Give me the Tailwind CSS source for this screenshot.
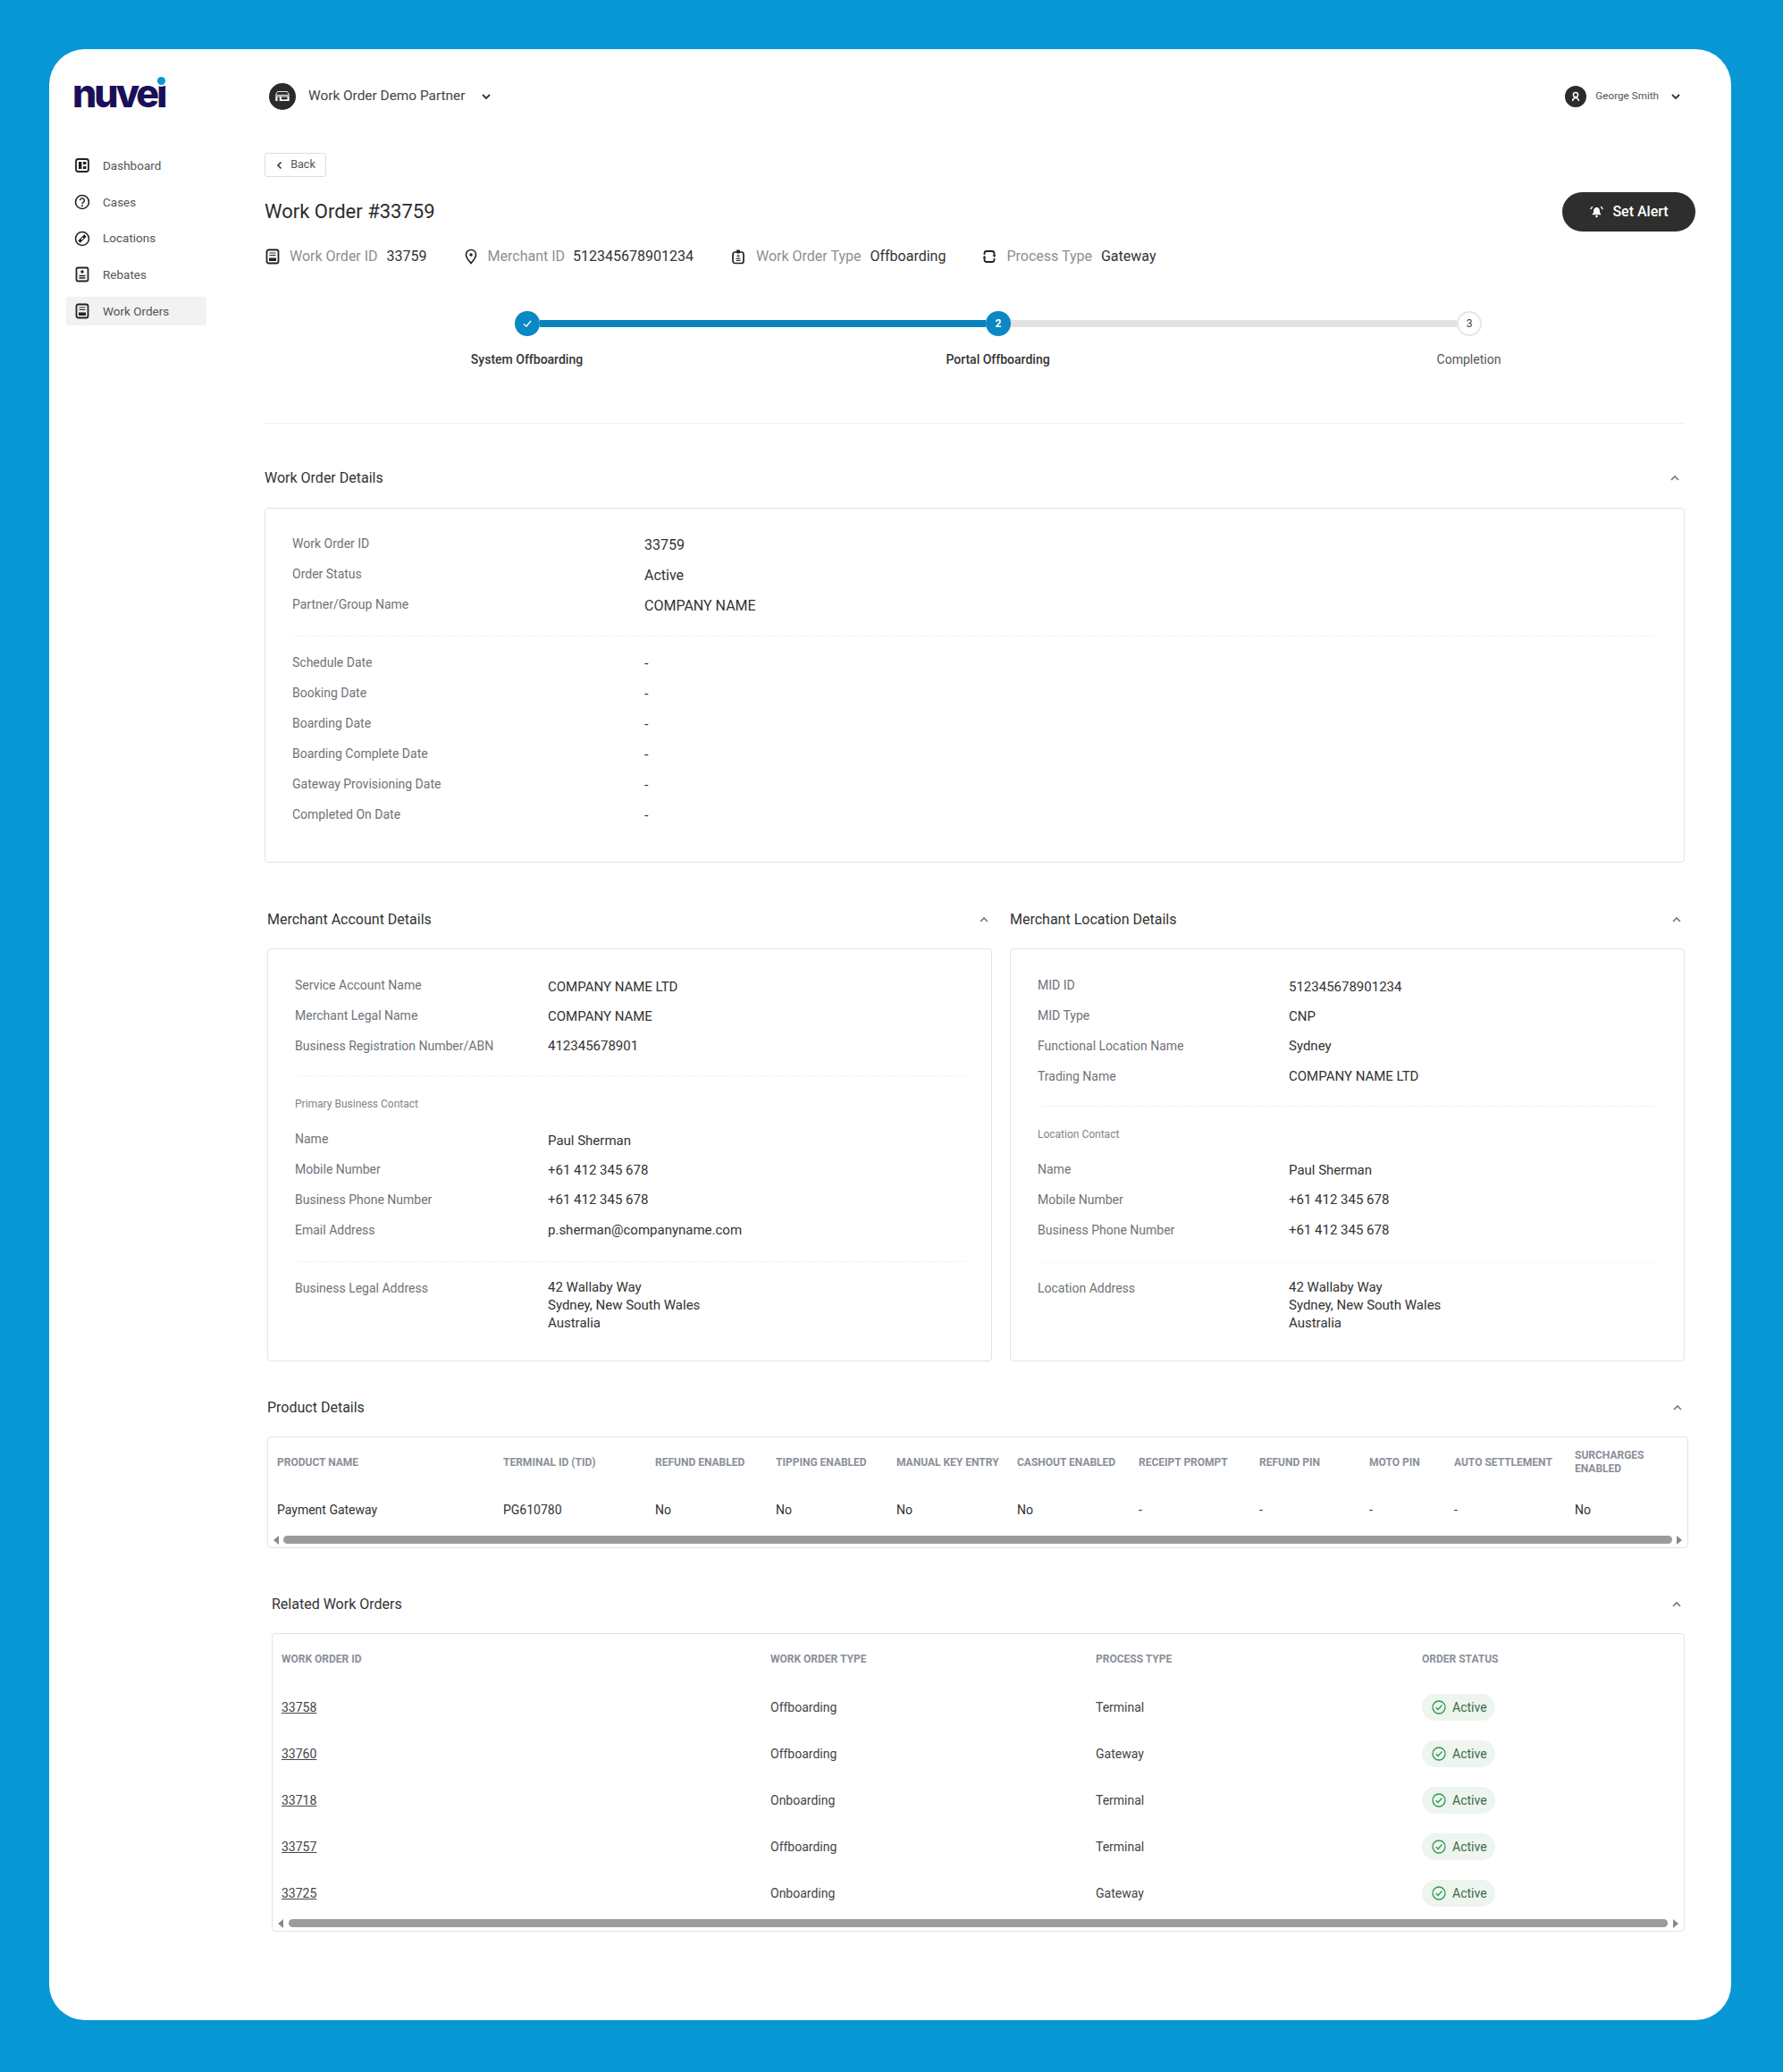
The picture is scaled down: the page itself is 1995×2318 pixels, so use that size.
<!DOCTYPE html>
<html lang="en">
<head>
  <meta charset="UTF-8" />
  <title>Work Order #33759</title>
  <script src="https://cdn.jsdelivr.net/npm/@tailwindcss/browser@4"></script>
</head>
<body class="bg-[#0797d4] font-['Roboto',sans-serif]">
  <div class="w-[1995px] h-[2318px] pt-[55px] pl-[55px]">
    <div class="w-[1882px] h-[2205px] bg-white rounded-[40px] flex">

      <!-- sidebar -->
      <aside class="w-[241px] shrink-0 pl-[19px]">
        <div class="relative w-[110px] h-[46px] mt-[26px] ml-[7px] text-[#1a1059] font-['Inter',sans-serif] font-extrabold text-[43px] leading-[46px] tracking-[-3px]">
          nuvei
          <span class="absolute left-[95px] top-[5px] w-[9px] h-[9px] rounded-full bg-[#0797d4] ring-2 ring-white"></span>
        </div>
        <nav class="mt-[42px] flex flex-col gap-[8.75px] text-[13.5px] text-[#555]">
          <a class="flex items-center h-[32px] pl-[9px] gap-[14px]">
            <svg class="w-[18px] h-[18px]" viewBox="0 0 18 18"><rect x="2" y="2" width="14" height="14" rx="2.5" fill="none" stroke="#222" stroke-width="1.8"/><rect x="5" y="5" width="3.5" height="8" fill="#222"/><rect x="10" y="5" width="3.5" height="3" fill="#222"/><rect x="10" y="10" width="3.5" height="3" fill="#222"/></svg>
            Dashboard
          </a>
          <a class="flex items-center h-[32px] pl-[9px] gap-[14px]">
            <svg class="w-[18px] h-[18px]" viewBox="0 0 18 18"><circle cx="9" cy="9" r="7.5" fill="none" stroke="#222" stroke-width="1.6"/><path d="M6.6 7.2a2.4 2.4 0 1 1 3.6 2.1c-.8.5-1.2.9-1.2 1.7" fill="none" stroke="#222" stroke-width="1.5"/><circle cx="9" cy="13" r="1" fill="#222"/></svg>
            Cases
          </a>
          <a class="flex items-center h-[32px] pl-[9px] gap-[14px]">
            <svg class="w-[18px] h-[18px]" viewBox="0 0 18 18"><circle cx="9" cy="9" r="7.5" fill="none" stroke="#222" stroke-width="1.6"/><path d="M5.5 12.5 12.5 5.500" stroke="#222" stroke-width="3.4"/><path d="M8 10 10 8" stroke="#fff" stroke-width="1.2"/></svg>
            Locations
          </a>
          <a class="flex items-center h-[32px] pl-[9px] gap-[14px]">
            <svg class="w-[18px] h-[18px]" viewBox="0 0 18 18"><rect x="2.5" y="1.5" width="13" height="15" rx="1.5" fill="none" stroke="#222" stroke-width="1.8"/><circle cx="9" cy="6" r="1.8" fill="#222"/><path d="M5.5 10.5h7M5.5 13h7" stroke="#222" stroke-width="1.3"/></svg>
            Rebates
          </a>
          <a class="flex items-center h-[32px] w-[157px] pl-[9px] gap-[14px] rounded-[3px] bg-[#f2f2f2]">
            <svg class="w-[18px] h-[18px]" viewBox="0 0 18 18"><rect x="2.5" y="1.5" width="13" height="15" rx="2" fill="none" stroke="#222" stroke-width="1.8"/><path d="M5.5 5h7M5.5 7.5h7" stroke="#222" stroke-width="1.2"/><rect x="5" y="10.5" width="8" height="3.5" fill="#222"/></svg>
            Work Orders
          </a>
        </nav>
      </aside>

      <!-- main -->
      <main class="w-[1601px]">
        <header class="h-[104px] pt-[2px] flex items-center justify-between pr-[13px]">
          <div class="flex items-center">
            <span class="ml-[5px] w-[30px] h-[30px] rounded-full bg-[#2b2b2b] flex items-center justify-center">
              <svg class="w-[22px] h-[22px]" viewBox="0 0 20 20"><path d="M5 5h10l2 3.500H3z" fill="#2b2b2b" stroke="#fff" stroke-width=".8"/><path d="M3 9.500h14v5H3z" fill="#fff"/><path d="M5 10.500h2v4H5zM9 10.500h6v2.500H9z" fill="#2b2b2b"/></svg>
            </span>
            <span class="ml-[14px] text-[15.4px] text-[#444]">Work Order Demo Partner</span>
            <svg class="ml-[18px] w-[12px] h-[12px]" viewBox="0 0 12 12"><path d="M2 4l4 4 4-4" fill="none" stroke="#333" stroke-width="1.8"/></svg>
          </div>
          <div class="flex items-center pr-[3px]">
            <span class="w-[24px] h-[24px] rounded-full bg-[#2b2b2b] flex items-center justify-center">
              <svg class="w-[16px] h-[16px]" viewBox="0 0 16 16"><circle cx="8" cy="6" r="2.6" fill="none" stroke="#fff" stroke-width="1.5"/><path d="M4.500 13c.5-2.500 1.700-3.600 3.500-3.600s3 1.100 3.500 3.600" fill="none" stroke="#fff" stroke-width="1.5"/></svg>
            </span>
            <span class="ml-[10px] text-[11.7px] text-[#555]">George Smith</span>
            <svg class="ml-[13px] w-[12px] h-[12px]" viewBox="0 0 12 12"><path d="M2 4l4 4 4-4" fill="none" stroke="#333" stroke-width="1.8"/></svg>
          </div>
        </header>

        <button class="mt-[12px] w-[69px] h-[27px] border border-[#ddd] rounded-[3px] flex items-center justify-center gap-[7px] text-[12.5px] text-[#555]">
          <svg class="w-[10px] h-[10px]" viewBox="0 0 10 10"><path d="M6.500 1.500 3 5l3.500 3.500" fill="none" stroke="#333" stroke-width="1.6"/></svg>
          Back
        </button>

        <div class="mt-[17px] h-[44px] flex items-center justify-between">
          <h1 class="text-[22px] font-normal text-[#2b2b2b] -mt-[1px]">Work Order #33759</h1>
          <button class="w-[149px] h-[44px] rounded-full bg-[#2e2e2e] text-white text-[16px] font-medium flex items-center justify-center gap-[9px]">
            <svg class="w-[17px] h-[17px]" viewBox="0 0 17 17"><path d="M8.500 3c2.300 0 3.400 1.800 3.400 4 0 2.200 1 3.200 1.800 4.200H3.300c.8-1 1.800-2 1.800-4.200 0-2.200 1.100-4 3.400-4z" fill="#fff"/><circle cx="8.500" cy="13" r="1.300" fill="#fff"/><path d="M3.800 2.200 1.600 5M13.200 2.200 15.400 5" stroke="#fff" stroke-width="1.3"/></svg>
            Set Alert
          </button>
        </div>

        <div class="mt-[16px] h-[24px] flex items-center text-[16px] text-[#333]">
          <svg class="w-[18px] h-[18px]" viewBox="0 0 18 18"><rect x="2.500" y="1.500" width="13" height="15" rx="2" fill="none" stroke="#222" stroke-width="1.8"/><path d="M5.500 5h7M5.500 7.500h7" stroke="#222" stroke-width="1.2"/><rect x="5" y="10.500" width="8" height="3.500" fill="#222"/></svg>
          <span class="ml-[10px] text-[#8a8f96]">Work Order ID</span><span class="ml-[10px]">33759</span>
          <svg class="ml-[40px] w-[18px] h-[18px]" viewBox="0 0 18 18"><path d="M9 1.500c3.300 0 5.500 2.400 5.500 5.400 0 3.500-3.300 6.600-5.500 9.600-2.200-3-5.500-6.100-5.500-9.600C3.500 3.900 5.700 1.500 9 1.500z" fill="none" stroke="#222" stroke-width="1.6"/><circle cx="9" cy="7" r="1.8" fill="#222"/></svg>
          <span class="ml-[10px] text-[#8a8f96]">Merchant ID</span><span class="ml-[9px]">512345678901234</span>
          <svg class="ml-[41px] w-[18px] h-[18px]" viewBox="0 0 18 18"><rect x="3" y="4" width="12" height="12.500" rx="2.500" fill="none" stroke="#222" stroke-width="1.7"/><rect x="7" y="1.500" width="4" height="4" rx="1" fill="#222"/><circle cx="9" cy="8.500" r="1.200" fill="none" stroke="#222" stroke-width=".9"/><path d="M6.500 11.500h5M6.500 13.500h5" stroke="#222" stroke-width="1.1"/></svg>
          <span class="ml-[11px] text-[#8a8f96]">Work Order Type</span><span class="ml-[10px]">Offboarding</span>
          <svg class="ml-[40px] w-[18px] h-[18px]" viewBox="0 0 18 18"><path d="M3.500 7V5.500A2.500 2.500 0 0 1 6 3h6a2.500 2.500 0 0 1 2.500 2.500V8M14.500 11v1.500A2.500 2.500 0 0 1 12 15H6a2.500 2.500 0 0 1-2.500-2.500V10" fill="none" stroke="#222" stroke-width="1.8"/><path d="M12.500 7.500h4L14.500 10zM1.500 10.500h4L3.500 8z" fill="#222"/></svg>
          <span class="ml-[10px] text-[#8a8f96]">Process Type</span><span class="ml-[10px]">Gateway</span>
        </div>

        <!-- stepper -->
        <div class="mt-[49px] ml-[280px] flex items-center h-[28px] w-[1082px]">
          <span class="w-[28px] h-[28px] rounded-full bg-[#0a88c4] flex items-center justify-center shrink-0">
            <svg class="w-[14px] h-[14px]" viewBox="0 0 14 14"><path d="M3 7.500 6 10l5-6" fill="none" stroke="#fff" stroke-width="1.3"/></svg>
          </span>
          <span class="grow h-[8px] bg-[#0a82bd]"></span>
          <span class="w-[28px] h-[28px] rounded-full bg-[#0a88c4] text-white text-[12px] font-bold flex items-center justify-center shrink-0">2</span>
          <span class="grow h-[8px] bg-[#e2e2e2]"></span>
          <span class="w-[28px] h-[28px] rounded-full bg-white border-2 border-[#e6e6e6] text-[#444] text-[12px] flex items-center justify-center shrink-0">3</span>
        </div>
        <div class="mt-[14px] ml-[30px] w-[1581px] grid grid-cols-3 text-center text-[14px] h-[24px] items-center">
          <span class="font-medium text-[#333]">System Offboarding</span>
          <span class="font-medium text-[#333]">Portal Offboarding</span>
          <span class="text-[#555]">Completion</span>
        </div>

        <div class="mt-[59px] w-[1588px] border-t border-[#eeeeee]"></div>

        <!-- work order details -->
        <div class="w-[1588px] h-[94px] pt-[28px] flex items-center justify-between pr-[3px] text-[16px] text-[#333]">
          <span>Work Order Details</span>
          <svg class="w-[14px] h-[14px]" viewBox="0 0 14 14"><path d="M3 9l4-4 4 4" fill="none" stroke="#777" stroke-width="1.6"/></svg>
        </div>
        <section class="w-[1589px] h-[397px] border border-[#e2e2e2] rounded-[4px] px-[30px] pt-[22px]">
          <div class="grid grid-cols-[394px_1fr] auto-rows-[34px] items-center text-[14px] text-[#6f7378]">
            <span>Work Order ID</span><span class="pt-1 text-[16px] text-[#333]">33759</span>
            <span>Order Status</span><span class="pt-1 text-[16px] text-[#333]">Active</span>
            <span>Partner/Group Name</span><span class="pt-1 text-[16px] text-[#333]">COMPANY NAME</span>
          </div>
          <div class="mt-[18px] mb-[12px] border-t border-dotted border-[#eeeeee]"></div>
          <div class="grid grid-cols-[394px_1fr] auto-rows-[34px] items-center text-[14px] text-[#6f7378]">
            <span>Schedule Date</span><span class="pt-1 text-[16px] text-[#333]">-</span>
            <span>Booking Date</span><span class="pt-1 text-[16px] text-[#333]">-</span>
            <span>Boarding Date</span><span class="pt-1 text-[16px] text-[#333]">-</span>
            <span>Boarding Complete Date</span><span class="pt-1 text-[16px] text-[#333]">-</span>
            <span>Gateway Provisioning Date</span><span class="pt-1 text-[16px] text-[#333]">-</span>
            <span>Completed On Date</span><span class="pt-1 text-[16px] text-[#333]">-</span>
          </div>
        </section>

        <!-- merchant sections -->
        <div class="ml-[3px] flex gap-[20px]">
          <div class="w-[811px]">
            <div class="h-[96px] pt-[31px] flex items-center justify-between pr-[2px] text-[16px] text-[#333]">
              <span>Merchant Account Details</span>
              <svg class="w-[14px] h-[14px]" viewBox="0 0 14 14"><path d="M3 9l4-4 4 4" fill="none" stroke="#777" stroke-width="1.6"/></svg>
            </div>
            <section class="h-[462px] border border-[#e2e2e2] rounded-[4px] pl-[30px] pr-[30px] pt-[23px]">
              <div class="grid grid-cols-[283px_1fr] auto-rows-[34px] items-center text-[14px] text-[#6f7378]">
                <span>Service Account Name</span><span class="pt-1 text-[15px] text-[#333]">COMPANY NAME LTD</span>
                <span>Merchant Legal Name</span><span class="pt-[3px] text-[15px] text-[#333]">COMPANY NAME</span>
                <span>Business Registration Number/ABN</span><span class="pt-[1px] text-[15px] text-[#333]">412345678901</span>
              </div>
              <div class="mt-[16px] border-t border-dotted border-[#eeeeee]"></div>
              <div class="mt-[23px] h-[16px] leading-[16px] text-[12px] text-[#80858c]">Primary Business Contact</div>
              <div class="mt-[14px] grid grid-cols-[283px_1fr] auto-rows-[34px] items-center text-[14px] text-[#6f7378]">
                <span>Name</span><span class="pt-1 text-[15px] text-[#333]">Paul Sherman</span>
                <span>Mobile Number</span><span class="pt-[3px] text-[15px] text-[#333]">+61 412 345 678</span>
                <span>Business Phone Number</span><span class="pt-[1px] text-[15px] text-[#333]">+61 412 345 678</span>
                <span>Email Address</span><span class="text-[15px] text-[#333]">p.sherman@companyname.com</span>
              </div>
              <div class="mt-[18px] border-t border-dotted border-[#eeeeee]"></div>
              <div class="mt-[19px] grid grid-cols-[283px_1fr] text-[14px] text-[#6f7378] leading-[20px]">
                <span>Business Legal Address</span>
                <span class="-mt-[1px] text-[15px] text-[#333]">42 Wallaby Way<br>Sydney, New South Wales<br>Australia</span>
              </div>
            </section>
          </div>
          <div class="w-[755px]">
            <div class="h-[96px] pt-[31px] flex items-center justify-between pr-[2px] text-[16px] text-[#333]">
              <span>Merchant Location Details</span>
              <svg class="w-[14px] h-[14px]" viewBox="0 0 14 14"><path d="M3 9l4-4 4 4" fill="none" stroke="#777" stroke-width="1.6"/></svg>
            </div>
            <section class="h-[462px] border border-[#e2e2e2] rounded-[4px] pl-[30px] pr-[30px] pt-[23px]">
              <div class="grid grid-cols-[281px_1fr] auto-rows-[34px] items-center text-[14px] text-[#6f7378]">
                <span>MID ID</span><span class="pt-1 text-[15px] text-[#333]">512345678901234</span>
                <span>MID Type</span><span class="pt-[3px] text-[15px] text-[#333]">CNP</span>
                <span>Functional Location Name</span><span class="pt-[1px] text-[15px] text-[#333]">Sydney</span>
                <span>Trading Name</span><span class="text-[15px] text-[#333]">COMPANY NAME LTD</span>
              </div>
              <div class="mt-[16px] border-t border-dotted border-[#eeeeee]"></div>
              <div class="mt-[23px] h-[16px] leading-[16px] text-[12px] text-[#80858c]">Location Contact</div>
              <div class="mt-[14px] grid grid-cols-[281px_1fr] auto-rows-[34px] items-center text-[14px] text-[#6f7378]">
                <span>Name</span><span class="pt-[3px] text-[15px] text-[#333]">Paul Sherman</span>
                <span>Mobile Number</span><span class="pt-[1px] text-[15px] text-[#333]">+61 412 345 678</span>
                <span>Business Phone Number</span><span class="text-[15px] text-[#333]">+61 412 345 678</span>
              </div>
              <div class="mt-[19px] border-t border-dotted border-[#eeeeee]"></div>
              <div class="mt-[18px] grid grid-cols-[281px_1fr] text-[14px] text-[#6f7378] leading-[20px]">
                <span>Location Address</span>
                <span class="-mt-[1px] text-[15px] text-[#333]">42 Wallaby Way<br>Sydney, New South Wales<br>Australia</span>
              </div>
            </section>
          </div>
        </div>

        <!-- product details -->
        <div class="ml-[3px] w-[1589px] h-[84px] pt-[20px] flex items-center justify-between pr-[4px] text-[16px] text-[#333]">
          <span>Product Details</span>
          <svg class="w-[14px] h-[14px]" viewBox="0 0 14 14"><path d="M3 9l4-4 4 4" fill="none" stroke="#777" stroke-width="1.6"/></svg>
        </div>
        <section class="ml-[3px] w-[1590px] h-[125px] border border-[#e2e2e2] rounded-[4px]">
          <div class="pl-[10px] grid grid-cols-[253px_170px_135px_135px_135px_136px_135px_123px_95px_135px_1fr] items-center h-[56px] text-[12px] leading-[15px] font-bold text-[#8a8f99]">
            <span>PRODUCT NAME</span><span>TERMINAL ID (TID)</span><span>REFUND ENABLED</span><span>TIPPING ENABLED</span><span>MANUAL KEY ENTRY</span><span>CASHOUT ENABLED</span><span>RECEIPT PROMPT</span><span>REFUND PIN</span><span>MOTO PIN</span><span>AUTO SETTLEMENT</span><span>SURCHARGES<br>ENABLED</span>
          </div>
          <div class="pl-[10px] grid grid-cols-[253px_170px_135px_135px_135px_136px_135px_123px_95px_135px_1fr] items-center h-[50px] text-[14px] text-[#333]">
            <span>Payment Gateway</span><span>PG610780</span><span>No</span><span>No</span><span>No</span><span>No</span><span>-</span><span>-</span><span>-</span><span>-</span><span>No</span>
          </div>
          <div class="mt-[4px] h-[9px] flex items-center pl-[5px] pr-[5px]">
            <svg class="w-[8px] h-[10px] shrink-0" viewBox="0 0 8 10"><path d="M7 0v10L1 5z" fill="#888"/></svg>
            <span class="mx-[4px] grow h-[9px] rounded-full bg-[#9b9b9b]"></span>
            <svg class="w-[8px] h-[10px] shrink-0" viewBox="0 0 8 10"><path d="M1 0v10l6-5z" fill="#888"/></svg>
          </div>
        </section>

        <!-- related work orders -->
        <div class="ml-[8px] w-[1580px] h-[95px] pt-[30px] flex items-center justify-between pr-[1px] text-[16px] text-[#333]">
          <span>Related Work Orders</span>
          <svg class="w-[14px] h-[14px]" viewBox="0 0 14 14"><path d="M3 9l4-4 4 4" fill="none" stroke="#777" stroke-width="1.6"/></svg>
        </div>
        <section class="ml-[8px] w-[1581px] h-[334px] border border-[#e2e2e2] rounded-[4px]">
          <div class="pl-[10px] grid grid-cols-[547px_364px_365px_1fr] items-center h-[56px] text-[12px] font-bold text-[#8a8f99]">
            <span>WORK ORDER ID</span><span>WORK ORDER TYPE</span><span>PROCESS TYPE</span><span>ORDER STATUS</span>
          </div>
          <div class="pl-[10px] grid grid-cols-[547px_364px_365px_1fr] auto-rows-[52px] items-center text-[14px] text-[#444]">
            <a class="underline">33758</a><span>Offboarding</span><span>Terminal</span>
            <span class="w-[82px] h-[30px] rounded-full bg-[#edf5ee] flex items-center gap-[7px] pl-[11px] text-[14px] text-[#3a6a48]"><svg class="w-[16px] h-[16px]" viewBox="0 0 16 16"><circle cx="8" cy="8" r="7" fill="none" stroke="#2f9a4c" stroke-width="1.3"/><path d="M4.700 8.200 7 10.500l4.500-5" fill="none" stroke="#2f9a4c" stroke-width="1.3"/></svg>Active</span>
            <a class="underline">33760</a><span>Offboarding</span><span>Gateway</span>
            <span class="w-[82px] h-[30px] rounded-full bg-[#edf5ee] flex items-center gap-[7px] pl-[11px] text-[14px] text-[#3a6a48]"><svg class="w-[16px] h-[16px]" viewBox="0 0 16 16"><circle cx="8" cy="8" r="7" fill="none" stroke="#2f9a4c" stroke-width="1.3"/><path d="M4.700 8.200 7 10.500l4.500-5" fill="none" stroke="#2f9a4c" stroke-width="1.3"/></svg>Active</span>
            <a class="underline">33718</a><span>Onboarding</span><span>Terminal</span>
            <span class="w-[82px] h-[30px] rounded-full bg-[#edf5ee] flex items-center gap-[7px] pl-[11px] text-[14px] text-[#3a6a48]"><svg class="w-[16px] h-[16px]" viewBox="0 0 16 16"><circle cx="8" cy="8" r="7" fill="none" stroke="#2f9a4c" stroke-width="1.3"/><path d="M4.700 8.200 7 10.500l4.500-5" fill="none" stroke="#2f9a4c" stroke-width="1.3"/></svg>Active</span>
            <a class="underline">33757</a><span>Offboarding</span><span>Terminal</span>
            <span class="w-[82px] h-[30px] rounded-full bg-[#edf5ee] flex items-center gap-[7px] pl-[11px] text-[14px] text-[#3a6a48]"><svg class="w-[16px] h-[16px]" viewBox="0 0 16 16"><circle cx="8" cy="8" r="7" fill="none" stroke="#2f9a4c" stroke-width="1.3"/><path d="M4.700 8.200 7 10.500l4.500-5" fill="none" stroke="#2f9a4c" stroke-width="1.3"/></svg>Active</span>
            <a class="underline">33725</a><span>Onboarding</span><span>Gateway</span>
            <span class="w-[82px] h-[30px] rounded-full bg-[#edf5ee] flex items-center gap-[7px] pl-[11px] text-[14px] text-[#3a6a48]"><svg class="w-[16px] h-[16px]" viewBox="0 0 16 16"><circle cx="8" cy="8" r="7" fill="none" stroke="#2f9a4c" stroke-width="1.3"/><path d="M4.700 8.200 7 10.500l4.500-5" fill="none" stroke="#2f9a4c" stroke-width="1.3"/></svg>Active</span>
          </div>
          <div class="mt-[3px] h-[9px] flex items-center pl-[5px] pr-[5px]">
            <svg class="w-[8px] h-[10px] shrink-0" viewBox="0 0 8 10"><path d="M7 0v10L1 5z" fill="#888"/></svg>
            <span class="mx-[5px] grow h-[9px] rounded-full bg-[#9b9b9b]"></span>
            <svg class="w-[8px] h-[10px] shrink-0" viewBox="0 0 8 10"><path d="M1 0v10l6-5z" fill="#888"/></svg>
          </div>
        </section>
      </main>
    </div>
  </div>
</body>
</html>
